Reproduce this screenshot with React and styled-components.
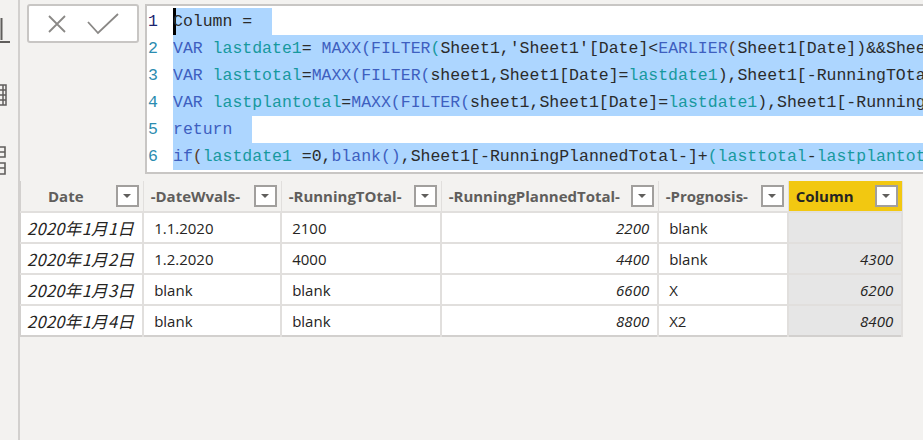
import React from 'react';
import styled, { createGlobalStyle } from 'styled-components';

const GlobalStyle = createGlobalStyle`
  html, body {
    margin: 0;
    padding: 0;
    background: #f3f2f0;
    overflow: hidden;
  }
`;

const Shell = styled.div`
  display: flex;
  width: 923px;
  height: 440px;
  background: #f3f2f0;
  overflow: hidden;
`;

const Sidebar = styled.div`
  width: 18px;
  flex: none;
  border-right: 2px solid #d2d0ce;
  display: flex;
  flex-direction: column;
  padding-top: 18px;
  gap: 40px;
  overflow: hidden;
`;

const Main = styled.div`
  flex: 1;
  min-width: 0;
  display: flex;
  flex-direction: column;
  padding-top: 4px;
`;

const FormulaBar = styled.div`
  display: flex;
  align-items: flex-start;
  gap: 6px;
  padding-left: 7px;
`;

const CommitBox = styled.div`
  width: 112px;
  height: 39px;
  box-sizing: border-box;
  flex: none;
  background: #fff;
  border: 2px solid #c8c6c4;
  border-radius: 3px;
  display: flex;
  align-items: center;
  padding-left: 18px;
  gap: 20px;
`;

const Editor = styled.div`
  flex: 1;
  min-width: 0;
  height: 170px;
  box-sizing: border-box;
  background: #fff;
  border: 2px solid #c8c6c4;
  border-right: none;
  display: flex;
  padding-top: 2px;
  overflow: hidden;
  font-family: 'Liberation Mono', 'DejaVu Sans Mono', monospace;
  font-size: 16.5px;
`;

const Gutter = styled.div`
  width: 25px;
  flex: none;
  padding-left: 1px;
`;

const LineNo = styled.div`
  height: 27px;
  line-height: 27px;
  color: ${({ $active }) => ($active ? '#1b2470' : '#2b8cb0')};
`;

const Code = styled.div`
  flex: 1;
  min-width: 0;
  overflow: hidden;
`;

const CodeLine = styled.div`
  height: 27px;
  line-height: 27px;
  white-space: pre;
`;

const Selection = styled.span`
  display: inline-block;
  height: 27px;
  background: #add6ff;
  box-shadow: ${({ $cursor }) => ($cursor ? 'inset 3px 0 0 #000' : 'none')};
`;

const tokenColors = {
  t: '#2b2b2b',
  k: '#3e5fc0',
  v: '#17999e',
  b: '#5b3a1e'
};

const Tok = styled.span`
  color: ${({ $kind }) => tokenColors[$kind]};
`;

const TableWrap = styled.div`
  margin-top: 7px;
  align-self: flex-start;
`;

const Grid = styled.table`
  border-collapse: collapse;
  table-layout: fixed;
  font-family: 'Open Sans', 'Noto Sans', sans-serif;
  font-size: 15px;
  color: #252423;
  border-bottom: 2px solid #d2d0ce;
  border-left: 1px solid #d2d0ce;
`;

const HeadCell = styled.th`
  height: 31px;
  padding: 0 4px 0 ${({ $indent }) => ($indent ? '27px' : '7px')};
  box-sizing: border-box;
  background: ${({ $accent }) => ($accent ? '#f2c811' : '#f3f2f0')};
  border-right: 1px solid #e1dfdd;
  font-weight: 700;
  color: ${({ $accent }) => ($accent ? '#252423' : '#605e5c')};
  text-align: left;
  white-space: nowrap;
`;

const HeadInner = styled.div`
  display: flex;
  align-items: center;
  justify-content: space-between;
`;

const FilterBtn = styled.span`
  width: 23px;
  height: 22px;
  box-sizing: border-box;
  flex: none;
  background: #fff;
  border: 2px solid #a19f9d;
  display: flex;
  align-items: center;
  justify-content: center;
  &::after {
    content: '';
    border-left: 4px solid transparent;
    border-right: 4px solid transparent;
    border-top: 4px solid #605e5c;
  }
`;

const Cell = styled.td`
  height: 31px;
  box-sizing: border-box;
  padding: 0 8px 0 10px;
  background: ${({ $shade }) => ($shade ? '#e6e6e6' : '#fff')};
  border-top: 2px solid #e1dfdd;
  border-right: 2px solid #e1dfdd;
  text-align: ${({ $right }) => ($right ? 'right' : 'left')};
  font-style: ${({ $italic }) => ($italic ? 'italic' : 'normal')};
  white-space: nowrap;
`;

const DateCell = styled(Cell)`
  padding-left: 6px;
  font-family: 'Noto Sans CJK JP', 'Noto Sans', sans-serif;
  font-size: 16.5px;
  letter-spacing: 0.3px;
`;

const BarIcon = () => (
  <svg width="12" height="26" viewBox="0 0 12 26">
    <path d="M1.5 0 V22 M0 24 H10" stroke="#605e5c" strokeWidth="2" fill="none" />
  </svg>
);

const TableIcon = () => (
  <svg width="8" height="22" viewBox="0 0 8 22">
    <path
      d="M0 1 H6 V21 H0 M0 6 H6 M0 11 H6 M0 16 H6 M3 1 V21"
      stroke="#605e5c"
      strokeWidth="1.5"
      fill="none"
    />
  </svg>
);

const ModelIcon = () => (
  <svg width="8" height="30" viewBox="0 0 8 30">
    <path
      d="M0 1 H5 V11 H0 M0 6 H5 M0 17 H5 V28 H0 M0 22 H5"
      stroke="#605e5c"
      strokeWidth="1.6"
      fill="none"
    />
  </svg>
);

const CrossIcon = () => (
  <svg width="20" height="20" viewBox="0 0 20 20">
    <path d="M2 2 L18 18 M18 2 L2 18" stroke="#8a8886" strokeWidth="1.8" fill="none" />
  </svg>
);

const CheckIcon = () => (
  <svg width="32" height="22" viewBox="0 0 32 22">
    <path d="M1 9 L11 20 L31 1" stroke="#8a8886" strokeWidth="1.8" fill="none" />
  </svg>
);

const lines = [
  { cursor: true, toks: [['t', 'Column =  ']] },
  {
    toks: [
      ['k', 'VAR '], ['v', 'lastdate1'], ['t', '= '], ['k', 'MAXX('], ['k', 'FILTER'], ['v', '('],
      ['t', "Sheet1,'Sheet1'[Date]<"], ['k', 'EARLIER'], ['b', '('],
      ['t', 'Sheet1[Date])&&Sheet1[-RunningTOtal-]<>BLANK()),Sheet1[Date])']
    ]
  },
  {
    toks: [
      ['k', 'VAR '], ['v', 'lasttotal'], ['t', '='], ['k', 'MAXX('], ['k', 'FILTER('],
      ['t', 'sheet1,Sheet1[Date]='], ['v', 'lastdate1'], ['t', '),Sheet1[-RunningTOtal-])']
    ]
  },
  {
    toks: [
      ['k', 'VAR '], ['v', 'lastplantotal'], ['t', '='], ['k', 'MAXX('], ['k', 'FILTER('],
      ['t', 'sheet1,Sheet1[Date]='], ['v', 'lastdate1'], ['t', '),Sheet1[-RunningPlannedTotal-])']
    ]
  },
  { toks: [['k', 'return  ']] },
  {
    toks: [
      ['k', 'if'], ['b', '('], ['v', 'lastdate1'], ['t', ' =0,'], ['k', 'blank()'],
      ['t', ',Sheet1[-RunningPlannedTotal-]+'], ['v', '(lasttotal'], ['t', '-'],
      ['v', 'lastplantotal'], ['t', '))          ']
    ]
  }
];

const columns = [
  { label: 'Date', indent: true },
  { label: '-DateWvals-' },
  { label: '-RunningTOtal-' },
  { label: '-RunningPlannedTotal-' },
  { label: '-Prognosis-' },
  { label: 'Column', accent: true }
];

const widths = [122, 138, 160, 217, 130, 114];

const rows = [
  ['2020年1月1日', '1.1.2020', '2100', '2200', 'blank', ''],
  ['2020年1月2日', '1.2.2020', '4000', '4400', 'blank', '4300'],
  ['2020年1月3日', 'blank', 'blank', '6600', 'X', '6200'],
  ['2020年1月4日', 'blank', 'blank', '8800', 'X2', '8400']
];

const App = () => (
  <Shell>
    <GlobalStyle />
    <Sidebar>
      <BarIcon />
      <TableIcon />
      <ModelIcon />
    </Sidebar>
    <Main>
      <FormulaBar>
        <CommitBox>
          <CrossIcon />
          <CheckIcon />
        </CommitBox>
        <Editor>
          <Gutter>
            {lines.map((l, i) => (
              <LineNo key={i} $active={i === 0}>{i + 1}</LineNo>
            ))}
          </Gutter>
          <Code>
            {lines.map((l, i) => (
              <CodeLine key={i}>
                <Selection $cursor={l.cursor}>
                  {l.toks.map(([kind, text], j) => (
                    <Tok key={j} $kind={kind}>{text}</Tok>
                  ))}
                </Selection>
              </CodeLine>
            ))}
          </Code>
        </Editor>
      </FormulaBar>
      <TableWrap>
        <Grid>
          <colgroup>
            {widths.map((w, i) => (
              <col key={i} style={{ width: w }} />
            ))}
          </colgroup>
          <thead>
            <tr>
              {columns.map((c) => (
                <HeadCell key={c.label} $accent={c.accent} $indent={c.indent}>
                  <HeadInner>
                    <span>{c.label}</span>
                    <FilterBtn />
                  </HeadInner>
                </HeadCell>
              ))}
            </tr>
          </thead>
          <tbody>
            {rows.map((r, i) => (
              <tr key={i}>
                <DateCell $italic>{r[0]}</DateCell>
                <Cell>{r[1]}</Cell>
                <Cell>{r[2]}</Cell>
                <Cell $right $italic>{r[3]}</Cell>
                <Cell>{r[4]}</Cell>
                <Cell $right $italic $shade>{r[5]}</Cell>
              </tr>
            ))}
          </tbody>
        </Grid>
      </TableWrap>
    </Main>
  </Shell>
);

export default App;
